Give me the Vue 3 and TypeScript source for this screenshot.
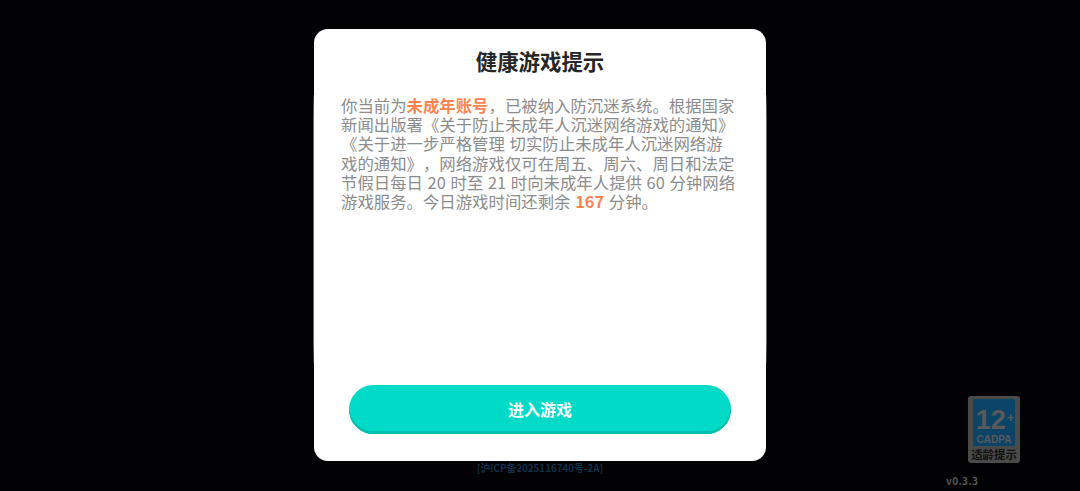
<script setup lang="ts">
const title = '健康游戏提示'
</script>

<template>
  <main class="screen">
    <div class="edge"></div>
    <section class="dialog">
      <h1 class="title">{{ title }}</h1>
      <p class="notice">你当前为<b>未成年账号</b>，已被纳入防沉迷系统。根据国家<br />新闻出版署《关于防止未成年人沉迷网络游戏的通知》<br />《关于进一步严格管理 切实防止未成年人沉迷网络游<br />戏的通知》，网络游戏仅可在周五、周六、周日和法定<br />节假日每日 20 时至 21 时向未成年人提供 60 分钟网络<br />游戏服务。今日游戏时间还剩余 <b>167</b> 分钟。</p>
      <button class="enter" type="button">进入游戏</button>
    </section>
    <p class="icp">[沪ICP备2025116740号-2A]</p>
    <aside class="side">
      <div class="badge">
        <div class="badge-top"><span class="age">12<i>+</i></span><span class="cadpa">CADPA</span></div>
        <span class="badge-label">适龄提示</span>
      </div>
      <span class="version">v0.3.3</span>
    </aside>
  </main>
</template>

<style>
html, body { margin: 0; background: #000; }
</style>

<style scoped>
.screen {
  width: 1080px;
  height: 491px;
  background: #020103;
  position: relative;
  overflow: hidden;
  display: flex;
  justify-content: center;
  padding-top: 29px;
  box-sizing: border-box;
  font-family: "Noto Sans CJK SC", "Noto Sans", sans-serif;
}
.edge {
  position: absolute;
  left: 313px;
  top: 95px;
  width: 454px;
  height: 268px;
  background: linear-gradient(#2a2a2a, #6a6a6a 8%, #6a6a6a 92%, #2a2a2a);
}
.dialog {
  position: relative;
  width: 452px;
  height: 432px;
  background: #fff;
  border-radius: 14px;
  display: flex;
  flex-direction: column;
  box-sizing: border-box;
  padding: 16px 27px 27px;
}
.title {
  margin: 0;
  font-size: 21.4px;
  line-height: 32px;
  font-weight: 700;
  text-align: center;
  color: #262626;
}
.notice {
  margin: 19px 0 0;
  width: 396px;
  font-size: 16.4px;
  line-height: 19.2px;
  color: #8c8c8c;
  white-space: nowrap;
  flex: 1;
  text-spacing-trim: space-all;
  word-spacing: 1px;
}
.notice b { color: #ff8450; font-weight: 700; }
.enter {
  width: 382px;
  height: 49px;
  margin: 0 8px;
  border: 0;
  padding: 0 0 1px;
  border-radius: 25px;
  background: #00dac6;
  box-shadow: inset 0 -3px 0 #00bfae;
  color: #fff;
  font: 700 16px "Noto Sans CJK SC", sans-serif;
}
.icp {
  position: absolute;
  left: 0;
  right: 0;
  top: 461px;
  margin: 0;
  text-align: center;
  font-size: 9.8px;
  line-height: 14px;
  font-weight: 700;
  color: #10304c;
}
.side {
  position: absolute;
  left: 946px;
  top: 396px;
  width: 76px;
  height: 92px;
}
.badge {
  position: absolute;
  left: 22px;
  top: 0;
  width: 52px;
  height: 67px;
  background: #4a4a4a;
  border-radius: 3px;
  box-sizing: border-box;
  padding: 3px 5px 0;
  display: flex;
  flex-direction: column;
  align-items: center;
}
.badge-top {
  width: 42px;
  height: 47px;
  flex: none;
  background: #0b4467;
  display: flex;
  flex-direction: column;
  align-items: center;
  color: #5a5a5a;
  font-family: "Liberation Sans", sans-serif;
  font-weight: 700;
}
.age { font-size: 27px; line-height: 24px; margin-top: 7px; margin-left: 2px; white-space: nowrap; }
.age i { font-style: normal; font-size: 13px; vertical-align: 7px; margin-left: 1px; }
.cadpa { font-size: 10px; line-height: 10px; margin-top: 3px; }
.badge-label {
  font-size: 11.4px;
  line-height: 17px;
  font-weight: 700;
  color: #111;
  white-space: nowrap;
}
.version {
  position: absolute;
  left: 0;
  top: 78px;
  font-size: 10px;
  line-height: 14px;
  font-weight: 700;
  color: #565656;
  letter-spacing: 0.4px;
}
</style>
